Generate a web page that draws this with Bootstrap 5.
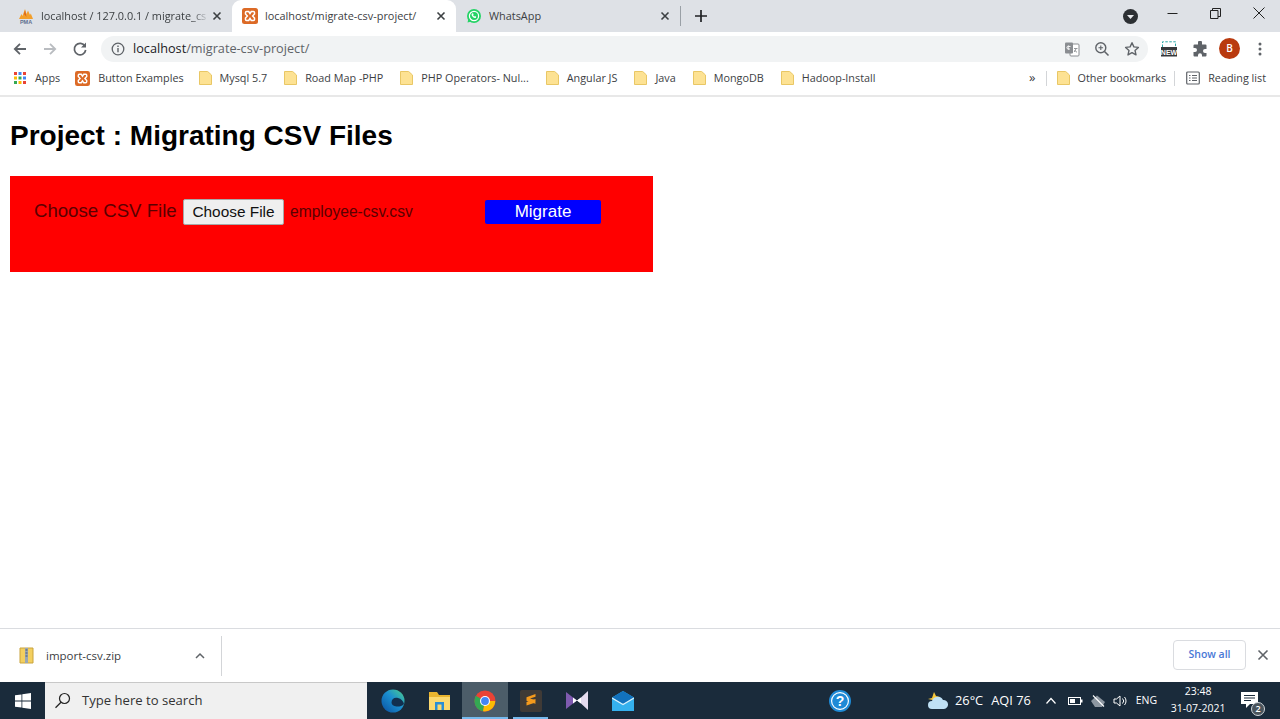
<!doctype html>
<html lang="en">
<head>
<meta charset="utf-8">
<title>Migrating CSV Files</title>
<link href="https://cdn.jsdelivr.net/npm/bootstrap@5.3.0/dist/css/bootstrap.min.css" rel="stylesheet">
<style>
html,body{height:100%}
body{overflow:hidden;background:#fff;font-family:"Open Sans","Noto Sans",sans-serif;color:#3c4043}
.shell{height:719px}
.tabstrip{height:32px;background:#dee1e6;padding-left:8px;flex:none}
.ctab{width:224px;height:32px;padding:0 7px 0 10px;font-size:10.9px;color:#3c4043;flex:none}
.ctab.on{background:#fff;border-radius:9px 9px 0 0}
.ctab .ttl{flex:1;margin-left:7px;white-space:nowrap;overflow:hidden}
.ctab .fadeout{mask-image:linear-gradient(90deg,#000 90%,transparent 100%);-webkit-mask-image:linear-gradient(90deg,#000 90%,transparent 100%)}
.tabx{width:16px;height:16px;flex:none}
.tabsep{width:1px;height:20px;background:#9aa0a6;flex:none}
.newtab{margin-left:13px}
.acctdot{margin-right:13px}
.winbtn{width:43px;flex:none;display:flex;justify-content:center;margin-bottom:6px}
.toolbar{height:32px;padding:1px 12px 0 12px;flex:none}
.navset{gap:14px;width:77px;flex:none}
.omni{height:26px;margin-left:12px;width:1047px;background:#f1f3f4;border-radius:13px;padding:0 8px 0 10px;font-size:12.7px;color:#5f6368;flex:none}
.omni b{font-weight:400;color:#202124}
.omni .url{margin-left:8px;flex:1}
.omniend{gap:14px}
.rightset{margin-left:13px;gap:13px}
.pzl{margin:0 -2px 0 2px}
.avatar{width:21px;height:21px;border-radius:50%;background:#b93a0f;color:#fff;font-size:10px;font-weight:600}
.bookbar{height:33px;padding:0 0 3px 13px;font-size:10.8px;color:#3c4043;border-bottom:2px solid #e8e8e8;flex:none;white-space:nowrap}
.bmk{margin-right:17px;gap:8px}
.bmk.firstb{margin-right:15px}
.bmk.xampb{gap:8px;margin-right:15px}
.bmend{margin-left:auto;padding-right:14px}
.vsep{width:1px;height:15px;background:#d3d5d8;flex:none}
.chev{font-size:13px;margin-right:10px}
.bmother{margin:0 8px 0 10px}
.readb{margin-left:11px;gap:8px}
.pagebody{flex:1;min-height:0;padding:23px 10px 0;font-family:"Liberation Sans",Arial,sans-serif;color:#000}
.pagebody h1{font-size:28px;font-weight:700;margin:0 0 24px;line-height:32px;color:#000}
.redbox{width:643px;height:96px;background:#f00;padding:23px 24px 0}
.lbl{font-size:18.6px;line-height:24px;width:143px;margin-right:6px;color:#5a0000;white-space:nowrap;flex:none}
.choosebtn{width:101px;height:26px;padding:0;background:#efefef;border:1px solid #a8a8a8;border-radius:2px;font-size:15.4px;line-height:22px;color:#111;font-family:inherit}
.fname{font-size:15.6px;line-height:26px;margin-left:6px;width:195px;flex:none;color:#5a0000}
.migbtn{width:116px;height:24px;margin-top:1px;padding:0;border:0;background:#00f;color:#fff;font-size:17px;border-radius:2px;line-height:24px;font-family:inherit}
.dlbar{height:54px;border-top:1px solid #dadce0;background:#fff;font-size:11.5px;color:#3c4043;padding:0 10px 0 19px;flex:none}
.dlname{margin-left:12px;width:148px;flex:none}
.dlsep{width:1px;height:40px;background:#d3d5d8;margin-left:15px}
.showall{margin-left:auto;width:73px;height:30px;padding:0;font-size:10.5px;font-weight:600;color:#4a78d6;border:1px solid #dadce0;border-radius:4px;background:#fff;font-family:inherit;margin-bottom:2px}
.dlx{margin-left:10px;margin-bottom:2px}
.taskbar{height:37px;background:#1a2b3b;color:#fff;flex:none;font-size:13px;white-space:nowrap}
.startb{width:45px;flex:none}
.searchb{width:322px;height:37px;background:#f0f0f0;color:#333;font-size:13.1px;padding-left:9px;padding-bottom:1px;gap:11px;flex:none;border-top:1px solid #c8c8c8}
.tbico{width:46px;height:37px;flex:none;position:relative}
.tbico.first{margin-left:3px}
.tbico.act{background:#4c5d69}
.tbico.run::after{content:"";position:absolute;left:0;right:0;bottom:0;height:2px;background:#76b9ed}
.sublimeb.run::after{left:5px;right:6px}
.helpb{margin-left:183px}
.weather{margin-left:76px;gap:7px;font-size:12.8px}
.weather .aqi{margin-left:1px}
.tray{margin-left:14px;gap:7px}
.eng{font-size:10.5px;margin-left:7px}
.clock{font-size:10.5px;line-height:17px;text-align:center;margin-left:12px;width:58px;padding-bottom:1px}
.notif{margin-left:14px;position:relative;width:19px;height:24px;margin-top:2px}
.badge2{position:absolute;right:-5px;bottom:-2px;width:14px;height:14px;border-radius:50%;background:#4a545c;border:1px solid #cfd5da;font-size:9px;line-height:12px;text-align:center;font-weight:600}
</style>
</head>
<body>
<svg width="0" height="0" class="d-block position-absolute">
 <defs>
  <symbol id="fold" viewBox="0 0 13 14"><path d="M.5.5h8.200L12.500 4v9.500H.5z" fill="#fde293" stroke="#e9c765"/></symbol>
  <symbol id="xamp" viewBox="0 0 16 16"><rect width="16" height="16" rx="2.500" fill="#dc6a26"/><path d="M4.500 3.500h2.200L8 5.500l1.300-2h2.200a1 1 0 0 1 1 1v1.400L10.600 8l1.900 2.100v1.400a1 1 0 0 1-1 1H9.300L8 10.500l-1.300 2H4.500a1 1 0 0 1-1-1v-1.400L5.400 8 3.500 5.900V4.500a1 1 0 0 1 1-1z" fill="none" stroke="#fff" stroke-width="1.500"/></symbol>
  <symbol id="xmark" viewBox="0 0 16 16"><path d="M4.500 4.500l7 7m0-7l-7 7" stroke="#3c4043" stroke-width="1.600" fill="none"/></symbol>
  <linearGradient id="edg" x1="0" y1="1" x2="1" y2="0"><stop offset="0" stop-color="#0a4fa0"/><stop offset=".55" stop-color="#1b8fd0"/><stop offset="1" stop-color="#4fd08a"/></linearGradient>
 </defs>
</svg>
<div class="shell d-flex flex-column">

 <div class="tabstrip d-flex align-items-center">
  <div class="ctab d-flex align-items-center">
   <svg width="16" height="16" viewBox="0 0 16 16"><path d="M1 11l2.500-5 1 2L7 1l1.500 5L10 2.500l2 4.500.8-1.500L15 11z" fill="#f29f2b"/><path d="M6 6l1-4 1.500 7z" fill="#d9641e"/><text x="8" y="15.500" font-size="5.500" font-weight="700" fill="#5f6f8f" text-anchor="middle" font-family="Liberation Sans">PMA</text></svg>
   <span class="ttl fadeout">localhost / 127.0.0.1 / migrate_cs</span>
   <svg class="tabx" viewBox="0 0 16 16"><use href="#xmark"/></svg>
  </div>
  <div class="ctab on d-flex align-items-center">
   <svg width="16" height="16"><use href="#xamp"/></svg>
   <span class="ttl">localhost/migrate-csv-project/</span>
   <svg class="tabx" viewBox="0 0 16 16"><use href="#xmark"/></svg>
  </div>
  <div class="ctab d-flex align-items-center">
   <svg width="16" height="16" viewBox="0 0 16 16"><circle cx="8" cy="8" r="7" fill="#25d366"/><path d="M1.500 14.500l1-4 3 3z" fill="#25d366"/><circle cx="8" cy="8" r="4.600" fill="none" stroke="#fff" stroke-width="1.200"/><path d="M6 5.500c-.7.800-.5 2 .6 3.200 1.100 1.200 2.400 1.700 3.300 1l.3-1-1.200-.7-.6.500c-.6-.3-1-.8-1.300-1.300l.5-.6-.6-1.300z" fill="#fff"/></svg>
   <span class="ttl">WhatsApp</span>
   <svg class="tabx" viewBox="0 0 16 16"><use href="#xmark"/></svg>
  </div>
  <span class="tabsep"></span>
  <svg class="newtab" width="14" height="14" viewBox="0 0 14 14"><path d="M7 1v12M1 7h12" stroke="#202124" stroke-width="1.700"/></svg>
  <div class="ms-auto d-flex align-items-center">
   <svg class="acctdot" width="15" height="15" viewBox="0 0 15 15"><circle cx="7.500" cy="7.500" r="7.500" fill="#2c2f33"/><path d="M4 6l3.500 4L11 6z" fill="#e8eaed"/></svg>
   <span class="winbtn"><svg width="11" height="11" viewBox="0 0 11 11"><path d="M.5 5.500h10" stroke="#222"/></svg></span>
   <span class="winbtn"><svg width="11" height="11" viewBox="0 0 11 11"><path d="M.5 2.500h7.500v8H.5zM2.500 2.500V.5h8v8H8" fill="none" stroke="#222"/></svg></span>
   <span class="winbtn"><svg width="12" height="12" viewBox="0 0 12 12"><path d="M.5.5l11 11m0-11l-11 11" stroke="#222"/></svg></span>
  </div>
 </div>

 <div class="toolbar d-flex align-items-center">
  <div class="navset d-flex align-items-center">
   <svg width="16" height="16" viewBox="0 0 16 16"><path d="M14 8H3M8 2.800L2.800 8 8 13.200" fill="none" stroke="#5f6368" stroke-width="1.800"/></svg>
   <svg width="16" height="16" viewBox="0 0 16 16"><path d="M2 8h11M8 2.800L13.200 8 8 13.200" fill="none" stroke="#b9bcc0" stroke-width="1.800"/></svg>
   <svg width="16" height="16" viewBox="0 0 16 16"><path d="M13 5.200A5.700 5.700 0 1 0 13.700 9" fill="none" stroke="#5f6368" stroke-width="1.700"/><path d="M14 1.500v5h-5z" fill="#5f6368"/></svg>
  </div>
  <div class="omni d-flex align-items-center">
   <svg width="14" height="14" viewBox="0 0 14 14"><circle cx="7" cy="7" r="5.800" fill="none" stroke="#5f6368" stroke-width="1.300"/><path d="M7 6v4.200M7 3.600v1.300" stroke="#5f6368" stroke-width="1.400"/></svg>
   <span class="url"><b>localhost</b>/migrate-csv-project/</span>
   <div class="omniend d-flex align-items-center">
    <svg width="16" height="16" viewBox="0 0 16 16"><rect x="6" y="3" width="9" height="12" rx="1" fill="#fff" stroke="#8a8d91"/><rect x="1" y="1.500" width="8" height="11" rx="1" fill="#8a8d91"/><path d="M6.500 5.500H4.200v2.500h1.400a1.700 1.700 0 1 1-.4-3" fill="none" stroke="#fff" stroke-width=".9"/><path d="M10 7.500h3.500M12 7.500c-.2 1.500-1 2.800-2 3.500M10.500 9c.5 1 1.300 1.800 2.500 2.200" fill="none" stroke="#8a8d91" stroke-width=".9"/></svg>
    <svg width="16" height="16" viewBox="0 0 16 16"><circle cx="6.800" cy="6.800" r="5" fill="none" stroke="#5f6368" stroke-width="1.400"/><path d="M10.500 10.500L14.500 14.500" stroke="#5f6368" stroke-width="1.600"/><path d="M4.500 6.800h4.600M6.800 4.500v4.600" stroke="#5f6368" stroke-width="1.100"/></svg>
    <svg width="16" height="16" viewBox="0 0 16 16"><path d="M8 1.700l1.900 4.200 4.500.5-3.400 3 1 4.500L8 11.600l-4 2.300 1-4.500-3.400-3 4.500-.5z" fill="none" stroke="#5f6368" stroke-width="1.400" stroke-linejoin="round"/></svg>
   </div>
  </div>
  <div class="rightset d-flex align-items-center">
   <svg width="16" height="16" viewBox="0 0 16 16"><path d="M1.500 6V.8h13V6" fill="none" stroke="#2aa6a6" stroke-dasharray="2.500 1.500"/><rect y="6" width="16" height="9.500" fill="#37393c"/><text x="8" y="13.500" font-size="7" font-weight="700" fill="#fff" text-anchor="middle" font-family="Liberation Sans">NEW</text></svg>
   <svg class="pzl" width="16" height="16" viewBox="0 0 16 16"><path d="M6 1.500a2 2 0 0 1 4 0V3.500h3.500a1 1 0 0 1 1 1V8h-1.500a2 2 0 0 0 0 4h1.500v2.500a1 1 0 0 1-1 1H10v-1.200a2 2 0 0 0-4 0v1.200H2.500a1 1 0 0 1-1-1V11H3a2 2 0 0 0 0-4H1.500V4.500a1 1 0 0 1 1-1H6z" fill="#5f6368"/></svg>
   <span class="avatar d-flex align-items-center justify-content-center">B</span>
   <svg width="14" height="16" viewBox="0 0 14 16"><circle cx="7" cy="3" r="1.500" fill="#5f6368"/><circle cx="7" cy="8" r="1.500" fill="#5f6368"/><circle cx="7" cy="13" r="1.500" fill="#5f6368"/></svg>
  </div>
 </div>

 <div class="bookbar d-flex align-items-center">
  <div class="bmk firstb d-flex align-items-center">
   <svg width="14" height="14" viewBox="0 0 14 14"><path d="M1 1h3v3H1z" fill="#ea4335"/><path d="M5.500 1h3v3h-3z" fill="#4285f4"/><path d="M10 1h3v3h-3z" fill="#ea4335"/><path d="M1 5.500h3v3H1z" fill="#fbbc04"/><path d="M5.500 5.500h3v3h-3z" fill="#34a853"/><path d="M10 5.500h3v3h-3z" fill="#4285f4"/><path d="M1 10h3v3H1z" fill="#34a853"/><path d="M5.500 10h3v3h-3z" fill="#fbbc04"/><path d="M10 10h3v3h-3z" fill="#ea4335"/></svg>
   <span>Apps</span>
  </div>
  <div class="bmk xampb d-flex align-items-center"><svg width="15" height="15"><use href="#xamp"/></svg><span>Button Examples</span></div>
  <div class="bmk d-flex align-items-center"><svg width="13" height="14"><use href="#fold"/></svg><span>Mysql 5.7</span></div>
  <div class="bmk d-flex align-items-center"><svg width="13" height="14"><use href="#fold"/></svg><span>Road Map -PHP</span></div>
  <div class="bmk d-flex align-items-center"><svg width="13" height="14"><use href="#fold"/></svg><span>PHP Operators- Nul...</span></div>
  <div class="bmk d-flex align-items-center"><svg width="13" height="14"><use href="#fold"/></svg><span>Angular JS</span></div>
  <div class="bmk d-flex align-items-center"><svg width="13" height="14"><use href="#fold"/></svg><span>Java</span></div>
  <div class="bmk d-flex align-items-center"><svg width="13" height="14"><use href="#fold"/></svg><span>MongoDB</span></div>
  <div class="bmk d-flex align-items-center"><svg width="13" height="14"><use href="#fold"/></svg><span>Hadoop-Install</span></div>
  <div class="bmend d-flex align-items-center">
   <span class="chev">»</span><span class="vsep"></span>
   <div class="bmother d-flex align-items-center gap-2"><svg width="13" height="14"><use href="#fold"/></svg><span>Other bookmarks</span></div>
   <span class="vsep"></span>
   <div class="readb d-flex align-items-center"><svg width="14" height="14" viewBox="0 0 14 14"><rect x=".7" y="1" width="12.600" height="12" rx="1" fill="none" stroke="#5f6368" stroke-width="1.200"/><path d="M3 4.500h1.500M6 4.500h5M3 7h1.500M6 7h5M3 9.500h1.500M6 9.500h5" stroke="#5f6368"/></svg><span>Reading list</span></div>
  </div>
 </div>

 <main class="pagebody">
  <h1>Project : Migrating CSV Files</h1>
  <div class="redbox d-flex align-items-start">
   <span class="lbl">Choose CSV File</span>
   <button type="button" class="choosebtn">Choose File</button>
   <span class="fname">employee-csv.csv</span>
   <button type="button" class="migbtn">Migrate</button>
  </div>
 </main>

 <div class="dlbar d-flex align-items-center">
  <svg width="15" height="17" viewBox="0 0 15 17"><path d="M1 1h13v15H1z" fill="#f3cf5f" stroke="#c9a33c"/><path d="M6 1h3v15H6z" fill="#9aa7b5"/><path d="M6.500 3h2M6.500 6h2M6.500 9h2" stroke="#4f5b66"/></svg>
  <span class="dlname">import-csv.zip</span>
  <svg width="12" height="12" viewBox="0 0 12 12"><path d="M2 8l4-4 4 4" fill="none" stroke="#5f6368" stroke-width="1.500"/></svg>
  <span class="dlsep"></span>
  <button type="button" class="btn showall">Show all</button>
  <svg class="dlx" width="14" height="14" viewBox="0 0 14 14"><path d="M2.500 2.500l9 9m0-9l-9 9" stroke="#5f6368" stroke-width="1.600"/></svg>
 </div>

 <div class="taskbar d-flex align-items-center">
  <div class="startb d-flex justify-content-center"><svg width="16" height="16" viewBox="0 0 16 16"><path d="M0 2.300l6.500-.9v6.100H0zM7.300 1.300L16 0v7.500H7.300zM0 8.400h6.500v6.200L0 13.700zM7.300 8.400H16V16l-8.700-1.200z" fill="#fff"/></svg></div>
  <div class="searchb d-flex align-items-center">
   <svg width="17" height="17" viewBox="0 0 17 17"><circle cx="10.500" cy="6.500" r="5" fill="none" stroke="#222" stroke-width="1.200"/><path d="M7 10.200L1.500 15.800" stroke="#222" stroke-width="1.300"/></svg>
   <span>Type here to search</span>
  </div>
  <div class="tbico first d-flex align-items-center justify-content-center">
   <svg width="24" height="24" viewBox="0 0 24 24"><circle cx="12" cy="12" r="11.500" fill="url(#edg)"/><path d="M10.500 13.500c0-3.500 3-5.500 6.500-4.500 3 .8 5.500 3 6 6-2 2.200-5 2.800-7.500 2.500-3-.3-5-2-5-4z" fill="#12304f"/></svg>
  </div>
  <div class="tbico d-flex align-items-center justify-content-center">
   <svg width="21" height="18" viewBox="0 0 21 18"><path d="M0 0h8l2 3h11v15H0z" fill="#e9b52f"/><path d="M0 5h21v13H0z" fill="#fbd96f"/><path d="M6 10h9v8H6z" fill="#2a8fd6"/><path d="M8.500 12.500h4V18h-4z" fill="#fbd96f"/></svg>
  </div>
  <div class="tbico act run d-flex align-items-center justify-content-center">
   <svg width="22" height="22" viewBox="0 0 22 22"><circle cx="11" cy="11" r="10.500" fill="#ea4335"/><path d="M11 11L1.800 5.800A10.500 10.500 0 0 0 9 21.300z" fill="#34a853"/><path d="M11 11h10.200A10.500 10.500 0 0 1 9 21.300z" fill="#fbbc04"/><circle cx="11" cy="11" r="5" fill="#fff"/><circle cx="11" cy="11" r="3.900" fill="#4285f4"/></svg>
  </div>
  <div class="tbico run sublimeb d-flex align-items-center justify-content-center">
   <svg width="22" height="22" viewBox="0 0 22 22"><rect width="22" height="22" rx="2" fill="#3f3a36"/><path d="M15.500 4L6.500 7.200v3.500l9 3V10L10 8.500l5.500-1.800zM6.500 12v3.500l9-3V9z" fill="#f59a1c"/></svg>
  </div>
  <div class="tbico d-flex align-items-center justify-content-center">
   <svg width="22" height="19" viewBox="0 0 22 19"><path d="M0 1l7 5.500 4 3-4 3L0 18z" fill="#7f5bb0"/><path d="M22 0v19l-7-6.500-4-3 4-3z" fill="#e4dcef"/><path d="M7 6.500l4 3 4-3v6l-4-3-4 3z" fill="#fff"/></svg>
  </div>
  <div class="tbico d-flex align-items-center justify-content-center">
   <svg width="22" height="20" viewBox="0 0 22 20"><path d="M0 6.500L11 0l11 6.500V20H0z" fill="#35b1ee"/><path d="M0 6.500L11 0l11 6.500L11 13z" fill="#1272bd"/><path d="M0 7l11 6.500L22 7" fill="none" stroke="#d9f0fb" stroke-width="1.200"/></svg>
  </div>
  <div class="helpb d-flex"><svg width="22" height="22" viewBox="0 0 22 22"><circle cx="11" cy="11" r="10" fill="#fff" stroke="#1e8ad6" stroke-width="2"/><circle cx="11" cy="11" r="7.800" fill="#1e8ad6"/><text x="11" y="16" font-size="14" font-weight="700" fill="#fff" text-anchor="middle" font-family="Liberation Sans">?</text></svg></div>
  <div class="weather d-flex align-items-center">
   <svg width="21" height="20" viewBox="0 0 21 20"><path d="M1 8l4-1 2-6 2 4 4 1-3 4z" fill="#f7c83a"/><path d="M5 18a4 4 0 0 1 0-8 6 6 0 0 1 11-1 4.500 4.500 0 0 1 1 9z" fill="#bfe0f5"/></svg>
   <span>26°C</span><span class="aqi">AQI 76</span>
  </div>
  <div class="tray d-flex align-items-center">
   <svg width="12" height="12" viewBox="0 0 12 12"><path d="M1.500 8.500L6 3.500l4.500 5" fill="none" stroke="#fff" stroke-width="1.200"/></svg>
   <svg width="15" height="10" viewBox="0 0 15 10" class="ms-1"><rect x=".5" y="1.500" width="12" height="7" fill="none" stroke="#fff"/><rect x="2" y="3" width="5" height="4" fill="#fff"/><rect x="13" y="3.500" width="1.500" height="3" fill="#fff"/></svg>
   <svg width="16" height="14" viewBox="0 0 16 14"><path d="M1 7l6-5.500L15 8l-3 5H5z" fill="#8d97a1"/><path d="M3 1.500l11 11" stroke="#fff" stroke-width="1.100"/></svg>
   <svg width="16" height="14" viewBox="0 0 16 14"><path d="M1 5h2.500L7 2v10L3.500 9H1z" fill="none" stroke="#fff"/><path d="M9.500 4.500a3.500 3.500 0 0 1 0 5M11.500 3a6 6 0 0 1 0 8" fill="none" stroke="#fff"/></svg>
  </div>
  <span class="eng">ENG</span>
  <div class="clock">23:48<br>31-07-2021</div>
  <div class="notif"><svg width="17" height="17" viewBox="0 0 17 17"><path d="M0 0h17v12H9l-4 4v-4H0z" fill="#fff"/><path d="M3 3.500h11M3 6h11M3 8.500h7" stroke="#1a2b3b"/></svg><span class="badge2">2</span></div>
 </div>
</div>
</body>
</html>
